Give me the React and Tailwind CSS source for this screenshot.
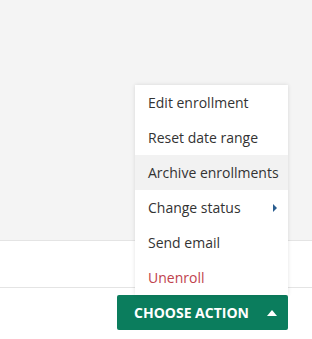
import React from "react"

export default function App() {
  const items = [
    { label: "Edit enrollment" },
    { label: "Reset date range" },
    { label: "Archive enrollments", active: true },
    { label: "Change status", sub: true },
    { label: "Send email" },
    { label: "Unenroll", danger: true },
  ]

  return (
    <div className="h-[339px] w-full flex flex-col bg-white font-['Open_Sans',sans-serif] text-[14px]">
      <div className="h-[241px] bg-[#f4f4f4] border-b border-[#e4e4e4]" />
      <div className="h-[47px] bg-white border-b border-[#e4e4e4]" />
      <div className="flex justify-end pr-[24px] pt-[7px]">
        <div className="relative">
          <ul className="absolute bottom-full right-0 w-[153px] bg-white shadow-[0_0_4px_rgba(0,0,0,0.12)]">
            {items.map((it, i) => (
              <li
                key={i}
                className={
                  "h-[35px] flex items-center justify-between whitespace-nowrap pl-[13px] pr-[10px] " +
                  (it.active ? "bg-[#f2f2f2] " : "") +
                  (it.danger ? "text-[#c0424c]" : "text-[#333333]")
                }
              >
                <span>{it.label}</span>
                {it.sub && (
                  <svg width="5" height="8" viewBox="0 0 5 8">
                    <path d="M0 0L4 4L0 8Z" fill="#2a5d8f" />
                  </svg>
                )}
              </li>
            ))}
          </ul>
          <button className="w-[171px] h-[35px] rounded-[2px] bg-[#0b7d5d] text-white font-bold text-[14px] flex items-center pl-[17px] gap-[18px]">
            <span>CHOOSE ACTION</span>
            <svg width="10" height="6" viewBox="0 0 10 6">
              <path d="M0 6L5 0L10 6Z" fill="#ffffff" />
            </svg>
          </button>
        </div>
      </div>
    </div>
  )
}
